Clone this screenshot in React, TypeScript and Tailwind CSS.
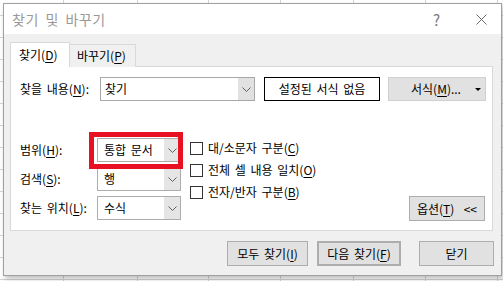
import React from 'react';

const colWidths = [64, 74, 71, 72, 73, 72, 72, 72];
const rowHeights = [16, 22, 22, 22, 22, 22, 22, 22, 22, 22, 22, 22, 22, 22];

function Mn({c}: {c: string}) {
  return <span className="underline underline-offset-[2px]">{c}</span>;
}

function Chevron() {
  return (
    <svg width="9" height="5" viewBox="0 0 9 5">
      <path d="M0.5 0.5 L4.5 4.5 L8.5 0.5" fill="none" stroke="#606060" strokeWidth="1" />
    </svg>
  );
}

function Select({text}: {text: string}) {
  return (
    <div className="flex h-[24px] w-[84px] border border-[#adadad] bg-white">
      <div className="flex flex-1 items-center pl-[6px]">{text}</div>
      <div className="flex w-[16px] items-center justify-center bg-[#e5e5e5]">
        <Chevron />
      </div>
    </div>
  );
}

function Check({children}: {children: React.ReactNode}) {
  return (
    <div className="flex h-[22px] items-center gap-[5px]">
      <div className="h-[13px] w-[13px] border border-[#333333] bg-white" />
      <span>{children}</span>
    </div>
  );
}

function Btn({children, className = ''}: {children: React.ReactNode; className?: string}) {
  return (
    <div
      className={`flex h-[25px] items-center justify-center border border-[#adadad] bg-[#e1e1e1] ${className}`}
    >
      {children}
    </div>
  );
}

export default function App() {
  return (
    <div className="relative h-[281px] w-[503px] overflow-hidden bg-white font-['Noto_Sans_CJK_KR','Noto_Sans',sans-serif] text-[12px] leading-none text-black [word-spacing:2px]">
      {/* spreadsheet behind */}
      <div className="flex flex-col">
        {rowHeights.map((h, r) => (
          <div key={r} className="flex" style={{height: h}}>
            {colWidths.map((w, c) => (
              <div key={c} className="shrink-0 border-b border-r border-[#d4d4d4]" style={{width: w}} />
            ))}
          </div>
        ))}
      </div>

      {/* dialog */}
      <div className="absolute left-[3px] top-[3px] flex h-[273px] w-[499px] flex-col border border-[#a0a0a0] bg-[#f0f0f0] shadow-[2px_3px_5px_rgba(0,0,0,0.25)]">
        <div className="flex h-[30px] items-center bg-white pl-[8px]">
          <span className="text-[14px] tracking-[0.5px] text-[#999999] [word-spacing:3px]">찾기 및 바꾸기</span>
          <span className="ml-auto text-[15px] text-[#7a7a7a]">?</span>
          <svg className="ml-[36px] mr-[14px]" width="11" height="11" viewBox="0 0 11 11">
            <path d="M0.5 0.5 L10.5 10.5 M10.5 0.5 L0.5 10.5" stroke="#6a6a6a" strokeWidth="1" />
          </svg>
        </div>

        <div className="flex flex-1 flex-col px-[6px] pt-[8px]">
          {/* tabs */}
          <div className="relative z-10 -mb-px flex h-[25px] items-end">
            <div className="flex h-[25px] w-[60px] items-center border border-b-0 border-[#d9d9d9] bg-white pl-[8px]">
              찾기(<Mn c="D" />)
            </div>
            <div className="flex h-[23px] w-[66px] items-center border-r border-t border-[#d9d9d9] bg-[#f0f0f0] pl-[7px]">
              바꾸기(<Mn c="P" />)
            </div>
          </div>

          {/* panel */}
          <div className="flex h-[165px] w-[483px] flex-col border border-[#d9d9d9] bg-white pl-[9px] pt-[10px]">
            <div className="flex items-center">
              <div className="w-[80px]">
                찾을 내용(<Mn c="N" />):
              </div>
              <div className="flex h-[24px] w-[155px] border border-[#a8a8a8] bg-white">
                <div className="flex flex-1 items-center pl-[4px]">찾기</div>
                <div className="flex w-[16px] items-center justify-center bg-[#e1e1e1]">
                  <Chevron />
                </div>
              </div>
              <div className="ml-[9px] flex h-[24px] w-[116px] items-center justify-center border border-black bg-white">
                설정된 서식 없음
              </div>
              <div className="ml-[8px] flex h-[24px] w-[98px] items-center border border-[#d0d0d0] bg-[#e1e1e1] pl-[22px]">
                서식(<Mn c="M" />)...
                <svg className="ml-auto mr-[4px]" width="6" height="3" viewBox="0 0 6 3">
                  <path d="M0 0 H6 L3 3 Z" fill="#000" />
                </svg>
              </div>
            </div>

            <div className="mt-[37px] flex">
              <div className="flex w-[77px] flex-col gap-[5px]">
                <div className="flex h-[24px] items-center">
                  범위(<Mn c="H" />):
                </div>
                <div className="flex h-[24px] items-center">
                  검색(<Mn c="S" />):
                </div>
                <div className="flex h-[24px] items-center">
                  찾는 위치(<Mn c="L" />):
                </div>
              </div>
              <div className="flex flex-col gap-[5px]">
                <div className="relative">
                  <Select text="통합 문서" />
                  <div className="absolute -bottom-[7px] -left-[8px] -right-[2px] -top-[6px] border-[5px] border-[#e81123]" />
                </div>
                <Select text="행" />
                <Select text="수식" />
              </div>
              <div className="-mt-[1px] ml-[9px] flex flex-col">
                <Check>
                  대/소문자 구분(<Mn c="C" />)
                </Check>
                <Check>
                  전체 셀 내용 일치(<Mn c="O" />)
                </Check>
                <Check>
                  전자/반자 구분(<Mn c="B" />)
                </Check>
              </div>
              <div className="flex flex-1 items-end justify-end pr-[7px]">
                <Btn className="-mb-[1px] w-[76px]">
                  옵션(<Mn c="T" />)&nbsp;&nbsp;&lt;&lt;
                </Btn>
              </div>
            </div>
          </div>

          {/* bottom buttons */}
          <div className="mt-[10px] flex">
            <Btn className="ml-[217px] w-[81px]">
              모두 찾기(<Mn c="I" />)
            </Btn>
            <Btn className="ml-[9px] w-[84px] border-2 border-[#0078d7]">
              다음 찾기(<Mn c="F" />)
            </Btn>
            <Btn className="ml-[18px] w-[75px]">닫기</Btn>
          </div>
        </div>
      </div>
    </div>
  );
}
